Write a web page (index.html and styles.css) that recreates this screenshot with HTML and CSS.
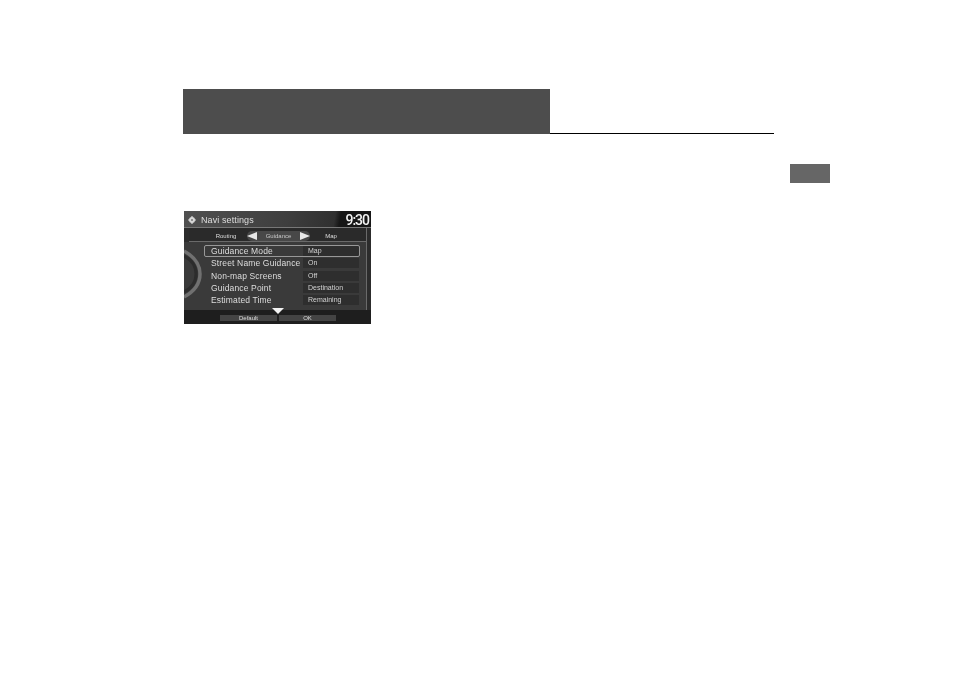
FILE: index.html
```html
<!DOCTYPE html>
<html lang="en">
<head>
    <meta charset="UTF-8">
    <title>Navi settings</title>
    <link rel="stylesheet" href="styles.css">
</head>
<body>
    <div class="page">
        <div class="head">
            <div class="head-block"></div>
            <div class="head-rule"></div>
        </div>
        <div class="side-tab"></div>

        <div class="screen">
            <div class="title-bar">
                <svg class="title-icon" viewBox="0 0 8 8" width="8" height="8">
                    <circle cx="4" cy="4" r="3" fill="#d8d8d8"/>
                    <path d="M4 0v8M0 4h8" stroke="#d8d8d8" stroke-width="1.2"/>
                    <circle cx="4" cy="4" r="1" fill="#777"/>
                </svg>
                <span class="title">Navi settings</span>
                <span class="clock">9:30</span>
            </div>
            <div class="tabs">
                <span class="tab tab-routing">Routing</span>
                <span class="tab-active">
                    <span class="arrow arrow-left"></span>
                    <span class="tab-label">Guidance</span>
                    <span class="arrow arrow-right"></span>
                </span>
                <span class="tab tab-map">Map</span>
            </div>
            <div class="list">
                <svg class="dial" viewBox="0 0 20 60" width="20" height="60">
                    <path d="M0 12C8 16 12 23 12 30 12 37 8 44 0 48" fill="none" stroke="#2c2c2c" stroke-width="3"/>
                    <path d="M0 7C11 13 16 21 16 30 16 39 11 47 0 53" fill="none" stroke="#707070" stroke-width="3.5"/>
                </svg>
                <div class="row row-selected"><span class="row-name">Guidance Mode</span><span class="row-value">Map</span></div>
                <div class="row"><span class="row-name">Street Name Guidance</span><span class="row-value">On</span></div>
                <div class="row"><span class="row-name">Non-map Screens</span><span class="row-value">Off</span></div>
                <div class="row"><span class="row-name">Guidance Point</span><span class="row-value">Destination</span></div>
                <div class="row"><span class="row-name">Estimated Time</span><span class="row-value">Remaining</span></div>
            </div>
            <div class="down-arrow"></div>
            <div class="bottom-bar">
                <span class="soft-btn">Default</span>
                <span class="soft-btn">OK</span>
            </div>
        </div>
    </div>
</body>
</html>
```

FILE: styles.css
```css
html, body {
    margin: 0;
    background-color: #fff;
}
.page {
    position: relative;
    width: 954px;
    height: 674px;
    padding: 89px 0 0 183px;
    box-sizing: border-box;
    font-family: "Liberation Sans", Arial, sans-serif;
    overflow: hidden;
}
.head {
    display: flex;
    align-items: flex-end;
    width: 591px;
    height: 45px;
}
.head-block {
    width: 367px;
    height: 45px;
    background-color: #4d4d4d;
}
.head-rule {
    flex: 1;
    height: 1px;
    background-color: #000;
}
.side-tab {
    position: absolute;
    left: 790px;
    top: 164px;
    width: 40px;
    height: 19px;
    background-color: #666;
}
.screen {
    position: relative;
    width: 187px;
    height: 113px;
    margin: 77px 0 0 1px;
    background-color: #2c2c2c;
    color: #dedede;
    overflow: hidden;
    filter: blur(0.3px);
}
.title-bar {
    display: flex;
    align-items: center;
    height: 17px;
    padding: 1px 2px 0 4px;
    box-sizing: border-box;
    border-bottom: 1px solid #777;
    background: linear-gradient(100deg, #505050 0%, #3e3e3e 55%, #303030 80%, #161616 83%, #161616 100%);
}
.title-icon {
    margin-right: 5px;
}
.title {
    font-size: 9px;
    letter-spacing: 0.1px;
}
.clock {
    margin-left: auto;
    font-family: Roboto, sans-serif;
    font-size: 14px;
    font-weight: 500;
    letter-spacing: -1px;
    color: #f4f4f4;
}
.tabs {
    display: flex;
    align-items: center;
    height: 14px;
    margin: 0 4px 0 5px;
    padding-top: 2px;
    box-sizing: border-box;
    border-bottom: 1px solid #6a6a6a;
    border-right: 1px solid #6a6a6a;
    background-color: #2a2a2a;
    font-size: 6px;
}
.tab {
    width: 42px;
    text-align: center;
}
.tab-routing {
    margin-left: 16px;
}
.tab-active {
    display: flex;
    align-items: center;
    justify-content: space-between;
    width: 63px;
    height: 10px;
    border-radius: 5px;
    background-color: #484848;
}
.tab-label {
    color: #c8c8c8;
}
.arrow {
    width: 0;
    height: 0;
    border-top: 4px solid transparent;
    border-bottom: 4px solid transparent;
}
.arrow-left {
    border-right: 10px solid #e8e8e8;
}
.arrow-right {
    border-left: 10px solid #e8e8e8;
}
.list {
    position: relative;
    display: flex;
    flex-direction: column;
    gap: 2.25px;
    height: 68px;
    margin-right: 4px;
    padding: 4px 7px 0 21px;
    box-sizing: border-box;
    border-right: 1px solid #6a6a6a;
    background-color: #3a3a3a;
}
.dial {
    position: absolute;
    left: 0;
    top: 2px;
}
.row {
    position: relative;
    display: flex;
    align-items: center;
    height: 10px;
    font-size: 8.5px;
    letter-spacing: 0.15px;
}
.row-selected {
    outline: 1px solid #989898;
    border-radius: 1px;
}
.row-name {
    width: 92px;
    padding-left: 6px;
    white-space: nowrap;
}
.row-value {
    flex: 1;
    height: 10px;
    line-height: 10px;
    padding-left: 5px;
    background-color: #2e2e2e;
    color: #d2d2d2;
    font-size: 7px;
    letter-spacing: 0;
}
.down-arrow {
    position: absolute;
    left: 88px;
    top: 97px;
    width: 0;
    height: 0;
    border-top: 6px solid #f2f2f2;
    border-left: 6px solid transparent;
    border-right: 6px solid transparent;
}
.bottom-bar {
    display: flex;
    align-items: flex-start;
    height: 14px;
    padding: 5px 0 0 36px;
    box-sizing: border-box;
    gap: 2px;
    background-color: #1e1e1e;
}
.soft-btn {
    width: 57px;
    height: 6px;
    line-height: 6px;
    background-color: #444;
    font-size: 6px;
    text-align: center;
}
```
